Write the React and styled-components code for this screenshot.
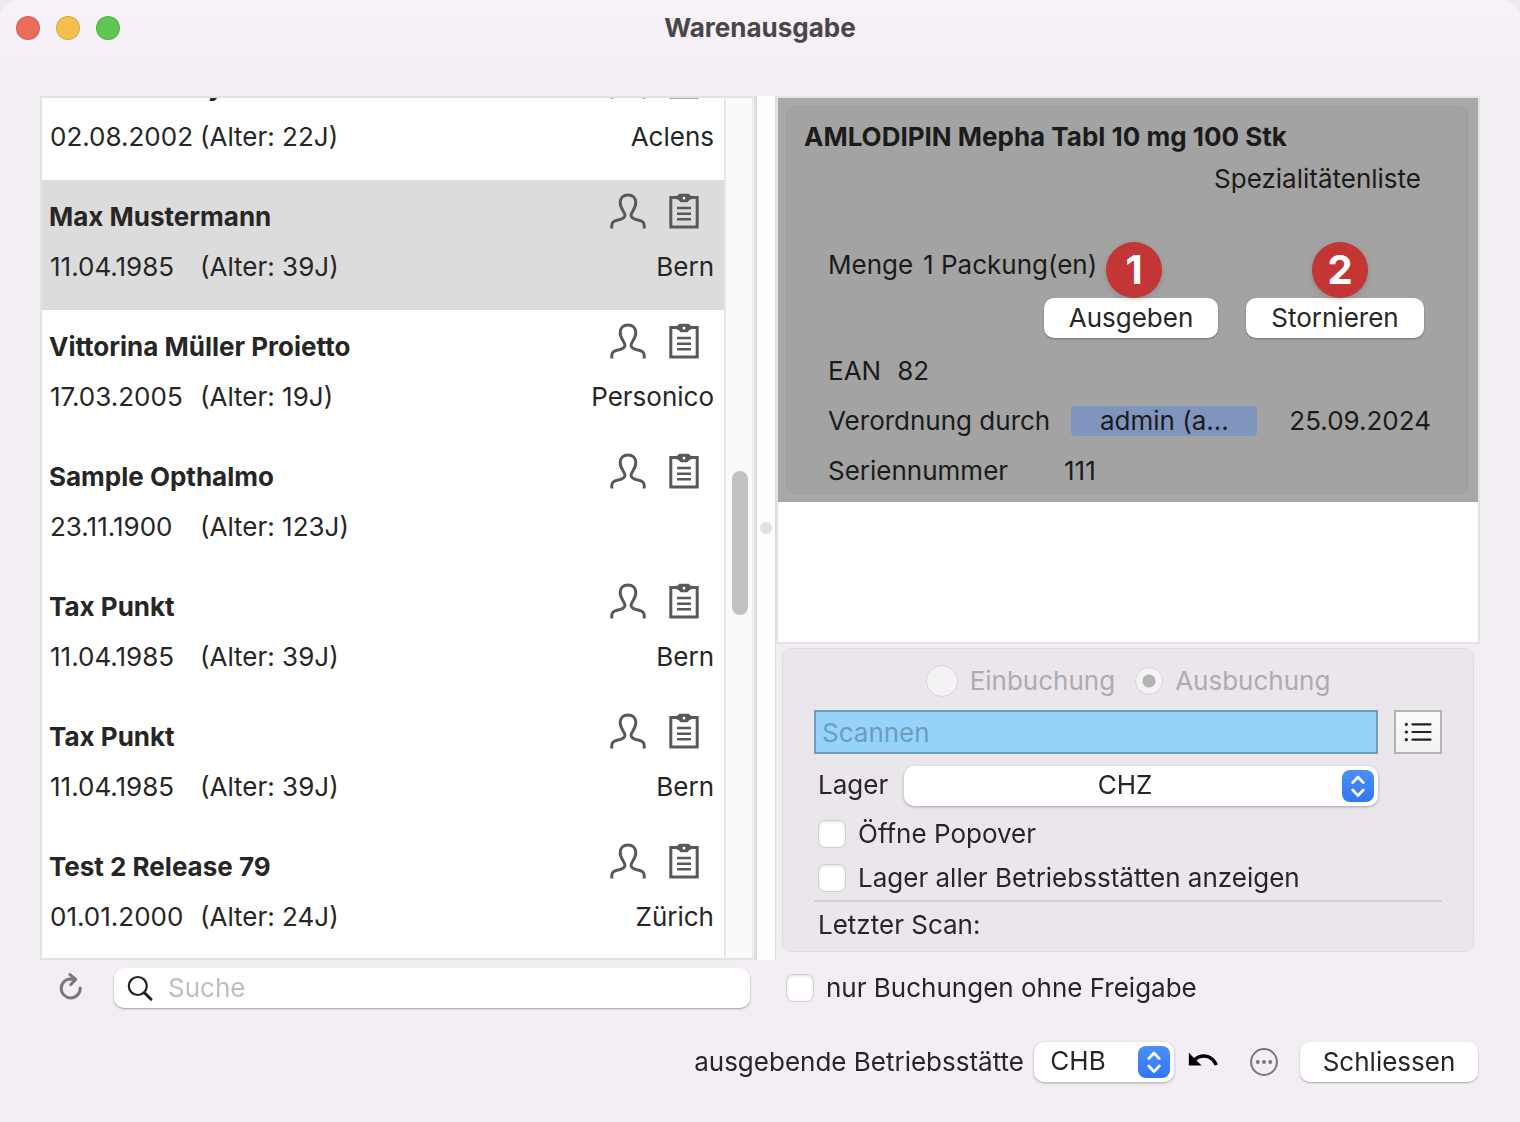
import React, { useEffect, useRef, useState } from "react"
import styled, { createGlobalStyle } from "styled-components"

const GlobalStyle = createGlobalStyle`
  * {
    box-sizing: border-box;
  }
  body {
    margin: 0;
    background: #efeaf0;
  }
  body, button, input, select {
    font-family: Inter, "Liberation Sans", sans-serif;
    font-size: 26px;
    line-height: 32px;
    color: #262626;
  }
`

const Window = styled.div`
  display: flex;
  flex-direction: column;
  height: 100vh;
  min-height: 900px;
  border-radius: 20px 20px 0 0;
  background: linear-gradient(#f8f3f9, #f3eef4 80px);
  overflow: hidden;
`

const TitleBar = styled.header`
  display: grid;
  grid-template-columns: 1fr auto 1fr;
  align-items: center;
  height: 56px;
  flex-shrink: 0;
  padding: 0 16px;
  h1 {
    margin: 0;
    font-size: 26px;
    line-height: 32px;
    font-weight: 700;
    color: #49464a;
  }
`

const Lights = styled.div`
  display: flex;
  gap: 16px;
`

const Light = styled.button`
  width: 24px;
  height: 24px;
  padding: 0;
  border: 1px solid rgba(0, 0, 0, 0.12);
  border-radius: 50%;
  background: ${props => props.$color};
`

const Content = styled.main`
  display: flex;
  flex-direction: column;
  flex: 1;
  min-height: 0;
  padding: 40px;
`

const Split = styled.div`
  display: grid;
  grid-template-columns: minmax(0, 716fr) 20px minmax(0, 704fr);
`

const Panes = styled(Split)`
  flex: 1;
  min-height: 0;
`

const PatientPane = styled.section`
  display: flex;
  min-height: 0;
  border: 2px solid #e3e3e3;
  background: #fff;
`

const PatientList = styled.ul`
  flex: 1;
  min-width: 0;
  margin: 0;
  padding: 0;
  list-style: none;
  overflow-y: auto;
  scrollbar-width: none;
`

const PatientRow = styled.li`
  height: 130px;
  padding: 13px 10px 0 7px;
  background: ${props => (props.$active ? "#dcdcdc" : "#fff")};
`

const PatientHead = styled.div`
  display: flex;
  gap: 22px;
  height: 58px;
  padding-right: 14px;
  h2 {
    flex: 1;
    margin: 0;
    padding-top: 8px;
    font-size: 26px;
    line-height: 32px;
    font-weight: 700;
  }
`

const PatientInfo = styled.div`
  display: grid;
  grid-template-columns: 150px 1fr auto;
  padding-left: 1px;
`

const ScrollTrack = styled.div`
  position: relative;
  width: 30px;
  border-left: 2px solid #e8e8e8;
  border-right: 2px solid #ededed;
  background: #fafafa;
`

const ScrollThumb = styled.div`
  position: absolute;
  top: 43.4%;
  left: 6px;
  width: 16px;
  height: 144px;
  border-radius: 8px;
  background: #c1c1c1;
`

const Divider = styled.div`
  display: flex;
  align-items: center;
  justify-content: center;
  border-left: 1px solid #d6d6d6;
  border-right: 1px solid #d9d9d9;
  background: #fdfdfd;
  &::after {
    content: "";
    width: 12px;
    height: 12px;
    border-radius: 50%;
    background: #e1e1e1;
  }
`

const RightPane = styled.section`
  display: flex;
  flex-direction: column;
  min-width: 0;
`

const OrderList = styled.div`
  flex: 1;
  border: 2px solid #e3e3e3;
  background: #fff;
`

const Order = styled.article`
  padding: 8px 10px 8px 8px;
  background: #a8a8a8;
`

const OrderCard = styled.div`
  display: flex;
  flex-direction: column;
  padding: 14px 36px 6px 41px;
  border: 1px solid #9c9c9c;
  border-radius: 10px;
  background: #a3a3a3;
  color: #1b1b1b;
  h2 {
    margin: 0 0 10px -24px;
    font-size: 26px;
    line-height: 32px;
    font-weight: 700;
  }
`

const ListName = styled.div`
  padding-right: 10px;
  text-align: right;
`

const Quantity = styled.div`
  display: flex;
  gap: 10px;
  margin-top: 54px;
`

const Actions = styled.div`
  display: flex;
  justify-content: flex-end;
  gap: 28px;
  margin-top: 17px;
  padding-right: 7px;
`

const Action = styled.div`
  position: relative;
`

const Badge = styled.span`
  position: absolute;
  top: -56px;
  left: ${props => props.$left};
  width: 56px;
  height: 56px;
  border-radius: 50%;
  background: #c43535;
  box-shadow: 0 2px 6px rgba(0, 0, 0, 0.15);
  color: #fff;
  font-size: 40px;
  line-height: 56px;
  font-weight: 700;
  text-align: center;
`

const PushButton = styled.button`
  display: block;
  height: 40px;
  width: ${props => props.$width};
  padding: 0;
  border: 0;
  border-radius: 10px;
  background: #fff;
  box-shadow: 0 1px 2px rgba(0, 0, 0, 0.3);
  line-height: 38px;
`

const Details = styled.div`
  display: flex;
  flex-direction: column;
  gap: 18px;
  margin-top: 17px;
`

const Detail = styled.div`
  display: flex;
  align-items: center;
  gap: ${props => props.$gap || "0"};
`

const Prescriber = styled.span`
  width: 186px;
  margin: 0 32px 0 auto;
  border-radius: 4px;
  background: #8095bd;
  line-height: 30px;
  text-align: center;
`

const SerialLabel = styled.span`
  width: 236px;
`

const BookingForm = styled.form`
  margin: 4px 6px 8px;
  padding: 16px 31px 10px;
  border: 1px solid #dfdae0;
  border-radius: 10px;
  background: #eae6eb;
`

const Radios = styled.div`
  display: flex;
  justify-content: center;
  gap: 20px;
`

const Choice = styled.label`
  display: flex;
  align-items: center;
  gap: 12px;
  color: ${props => (props.$disabled ? "#aeabaf" : "inherit")};
`

const Radio = styled.input`
  appearance: none;
  width: ${props => props.$size};
  height: ${props => props.$size};
  margin: 0;
  border: 1px solid #d8d4d9;
  border-radius: 50%;
  background: #f4f2f5;
  &:checked {
    background: radial-gradient(circle, #b5b3b6 6px, #f4f2f5 7px);
  }
`

const Checkbox = styled.input`
  appearance: none;
  width: 28px;
  height: 28px;
  margin: 0;
  border: 1px solid #d0ccd1;
  border-radius: 7px;
  background: #fff;
  box-shadow: inset 0 1px 3px rgba(0, 0, 0, 0.12);
  &:checked {
    background: #3b82f7;
  }
`

const ScanRow = styled.div`
  display: flex;
  gap: 16px;
  margin-top: 13px;
`

const ScanInput = styled.input`
  flex: 1;
  min-width: 0;
  height: 44px;
  padding: 0 6px;
  border: 2px solid #6d9dbd;
  border-radius: 0;
  background: #95d3fb;
  outline: none;
  &::placeholder {
    color: #6d9dbd;
    opacity: 1;
  }
`

const ListButton = styled.button`
  display: flex;
  align-items: center;
  justify-content: center;
  width: 48px;
  height: 44px;
  padding: 0;
  border: 2px solid #b3b3b3;
  background: linear-gradient(#fbfbfb, #f2f2f2);
`

const StoreRow = styled.div`
  display: flex;
  gap: 16px;
  margin: 12px 64px 12px 4px;
  label {
    line-height: 38px;
  }
`

const SelectBox = styled.div`
  position: relative;
  flex: ${props => (props.$width ? "none" : "1")};
  width: ${props => props.$width || "auto"};
  select {
    appearance: none;
    display: block;
    width: 100%;
    height: 40px;
    padding: 0 ${props => (props.$width ? "52px" : "32px")} 2px 0;
    border: 0;
    border-radius: 10px;
    background: #fff;
    box-shadow: 0 1px 3px rgba(0, 0, 0, 0.3);
    text-align-last: center;
  }
  svg {
    position: absolute;
    top: 4px;
    right: 4px;
    border-radius: 8px;
    background: linear-gradient(#4a90f8, #3176f7);
    pointer-events: none;
  }
`

const Options = styled.div`
  display: flex;
  flex-direction: column;
  gap: 12px;
  padding-left: 4px;
`

const LastScan = styled.div`
  margin-top: 6px;
  padding: 7px 4px 0;
  border-top: 2px solid #d2ced3;
`

const FilterRow = styled(Split)`
  margin-top: 8px;
  align-items: center;
`

const SearchArea = styled.div`
  display: flex;
  align-items: center;
  gap: 28px;
  padding: 0 6px 0 16px;
`

const SearchField = styled.label`
  display: flex;
  align-items: center;
  flex: 1;
  gap: 14px;
  min-width: 0;
  height: 40px;
  padding: 0 12px;
  border-radius: 10px;
  background: #fff;
  box-shadow: 0 1px 2px rgba(0, 0, 0, 0.35);
  input {
    flex: 1;
    min-width: 0;
    padding: 0;
    border: 0;
    background: none;
    outline: none;
    &::placeholder {
      color: #c0bec1;
      opacity: 1;
    }
  }
`

const IconButton = styled.button`
  display: flex;
  padding: 0;
  border: 0;
  background: none;
`

const FilterOption = styled.div`
  grid-column: 3;
  padding-left: 10px;
`

const Footer = styled.footer`
  display: flex;
  align-items: center;
  justify-content: flex-end;
  gap: 10px;
  margin-top: 34px;
  padding-right: 2px;
`

const FooterIcons = styled.div`
  display: flex;
  align-items: center;
  gap: 30px;
  margin: 0 12px 0 2px;
`

const PersonIcon = () => (
  <svg width="36" height="36" viewBox="0 0 36 36" fill="none" stroke="#595959" strokeWidth="3">
    <path d="M1.8 35.5V32.5C1.8 29 3.8 28 8 27C12.5 26 15 24.8 15 22.2C15 19.2 10.2 16 10.2 9.6C10.2 4.8 13.3 2 18 2C22.7 2 25.8 4.8 25.8 9.6C25.8 16 21 19.2 21 22.2C21 24.8 23.5 26 28 27C32.2 28 34.2 29 34.2 32.5V35.5" />
  </svg>
)

const ClipboardIcon = () => (
  <svg width="32" height="36" viewBox="-1 0 32 36" fill="none" stroke="#595959">
    <path d="M1.8 4.4H28.2V33.9H1.8Z" strokeWidth="3" />
    <path d="M8 15H22M8 20.7H22M8 26.3H22" strokeWidth="2.6" />
    <path
      d="M10.2 0.7H19.8L21.5 2.8H23V6L20.5 7L18.4 9.2H11.6L9.5 7L7 6V2.8H8.5ZM15 3.7A1.4 1.4 0 1 0 15 6.5A1.4 1.4 0 1 0 15 3.7Z"
      fill="#595959"
      fillRule="evenodd"
      stroke="none"
    />
    <circle cx="15" cy="5.1" r="1.4" fill="#fff" stroke="none" />
  </svg>
)

const StepperIcon = () => (
  <svg
    width="32"
    height="32"
    viewBox="0 0 32 32"
    fill="none"
    stroke="#fff"
    strokeWidth="2.8"
    strokeLinecap="round"
    strokeLinejoin="round"
  >
    <path d="M10.7 12.6L16 7L21.3 12.6M10.7 20L16 25.6L21.3 20" />
  </svg>
)

const BulletsIcon = () => (
  <svg width="28" height="20" viewBox="0 0 28 20" stroke="#222" strokeWidth="2.2" strokeLinecap="round">
    <path d="M8.5 2.3H26.5M8.5 10H26.5M8.5 17.7H26.5" />
    <path d="M2.3 2.3h0.1M2.3 10h0.1M2.3 17.7h0.1" strokeWidth="3.2" />
  </svg>
)

const RefreshIcon = () => (
  <svg
    width="30"
    height="30"
    viewBox="-1 0 30 30"
    fill="none"
    stroke="#7a767b"
    strokeWidth="3"
    strokeLinecap="round"
    strokeLinejoin="round"
  >
    <path d="M23.2 15A9.5 9.5 0 1 1 13.7 5.9L18.4 6.4" />
    <path d="M13 1.6L18.6 6.4L13.8 11.6" />
  </svg>
)

const SearchIcon = () => (
  <svg width="28" height="28" viewBox="0 0 28 28" fill="none" stroke="#222">
    <circle cx="11.8" cy="12" r="9" strokeWidth="2.2" />
    <path d="M18.5 18.7L25 25.2" strokeWidth="3" strokeLinecap="round" />
  </svg>
)

const UndoIcon = () => (
  <svg width="34" height="34" viewBox="0 1.5 24 24" fill="#000">
    <path d="M12.5 8c-2.65 0-5.05.99-6.9 2.6L2 7v9h9l-3.62-3.62c1.39-1.16 3.16-1.88 5.12-1.88 3.54 0 6.55 2.31 7.6 5.5l2.37-.78C21.08 11.03 17.15 8 12.5 8z" />
  </svg>
)

const MoreIcon = () => (
  <svg width="28" height="28" viewBox="0 0 28 28" fill="#7a767b">
    <circle cx="14" cy="14" r="12.9" fill="none" stroke="#7a767b" strokeWidth="2" />
    <circle cx="7.8" cy="14" r="2" />
    <circle cx="14" cy="14" r="2" />
    <circle cx="20.2" cy="14" r="2" />
  </svg>
)

const patients = [
  { name: "Melanie Darly", birth: "02.08.2002", age: 22, city: "Aclens" },
  { name: "Max Mustermann", birth: "11.04.1985", age: 39, city: "Bern" },
  { name: "Vittorina Müller Proietto", birth: "17.03.2005", age: 19, city: "Personico" },
  { name: "Sample Opthalmo", birth: "23.11.1900", age: 123, city: "" },
  { name: "Tax Punkt", birth: "11.04.1985", age: 39, city: "Bern" },
  { name: "Tax Punkt", birth: "11.04.1985", age: 39, city: "Bern" },
  { name: "Test 2 Release 79", birth: "01.01.2000", age: 24, city: "Zürich" },
]

const Patients = () => {
  const [activeIndex, setActiveIndex] = useState(1)
  const list = useRef(null)

  useEffect(() => {
    list.current.scrollTop = 48
  }, [])

  return (
    <PatientPane>
      <PatientList ref={list}>
        {patients.map((patient, i) => (
          <PatientRow key={i} $active={activeIndex === i} onClick={() => setActiveIndex(i)}>
            <PatientHead>
              <h2>{patient.name}</h2>
              <PersonIcon />
              <ClipboardIcon />
            </PatientHead>
            <PatientInfo>
              <span>{patient.birth}</span>
              <span>(Alter: {patient.age}J)</span>
              <span>{patient.city}</span>
            </PatientInfo>
          </PatientRow>
        ))}
      </PatientList>
      <ScrollTrack>
        <ScrollThumb />
      </ScrollTrack>
    </PatientPane>
  )
}

const OrderItem = () => (
  <Order>
    <OrderCard>
      <h2>AMLODIPIN Mepha Tabl 10 mg 100 Stk</h2>
      <ListName>Spezialitätenliste</ListName>
      <Quantity>
        <span>Menge</span>
        <span>1 Packung(en)</span>
      </Quantity>
      <Actions>
        <Action>
          <PushButton type="button" $width="174px">
            Ausgeben
          </PushButton>
          <Badge $left="62px">1</Badge>
        </Action>
        <Action>
          <PushButton type="button" $width="178px">
            Stornieren
          </PushButton>
          <Badge $left="66px">2</Badge>
        </Action>
      </Actions>
      <Details>
        <Detail $gap="16px">
          <span>EAN</span>
          <span>82</span>
        </Detail>
        <Detail>
          <span>Verordnung durch</span>
          <Prescriber>admin (a...</Prescriber>
          <span>25.09.2024</span>
        </Detail>
        <Detail>
          <SerialLabel>Seriennummer</SerialLabel>
          <span>111</span>
        </Detail>
      </Details>
    </OrderCard>
  </Order>
)

const Booking = () => (
  <BookingForm>
    <Radios>
      <Choice $disabled>
        <Radio type="radio" name="booking" $size="32px" disabled />
        Einbuchung
      </Choice>
      <Choice $disabled>
        <Radio type="radio" name="booking" $size="28px" disabled defaultChecked />
        Ausbuchung
      </Choice>
    </Radios>
    <ScanRow>
      <ScanInput type="text" placeholder="Scannen" aria-label="Scannen" />
      <ListButton type="button" aria-label="Liste">
        <BulletsIcon />
      </ListButton>
    </ScanRow>
    <StoreRow>
      <label htmlFor="store">Lager</label>
      <SelectBox>
        <select id="store">
          <option>CHZ</option>
        </select>
        <StepperIcon />
      </SelectBox>
    </StoreRow>
    <Options>
      <Choice>
        <Checkbox type="checkbox" />
        Öffne Popover
      </Choice>
      <Choice>
        <Checkbox type="checkbox" />
        Lager aller Betriebsstätten anzeigen
      </Choice>
    </Options>
    <LastScan>Letzter Scan:</LastScan>
  </BookingForm>
)

const App = () => (
  <>
    <GlobalStyle />
    <Window>
      <TitleBar>
        <Lights>
          <Light type="button" aria-label="Schliessen" $color="#ed6a5e" />
          <Light type="button" aria-label="Minimieren" $color="#f5bf4f" />
          <Light type="button" aria-label="Maximieren" $color="#61c554" />
        </Lights>
        <h1>Warenausgabe</h1>
      </TitleBar>
      <Content>
        <Panes>
          <Patients />
          <Divider />
          <RightPane>
            <OrderList>
              <OrderItem />
            </OrderList>
            <Booking />
          </RightPane>
        </Panes>
        <FilterRow>
          <SearchArea>
            <IconButton type="button" aria-label="Aktualisieren">
              <RefreshIcon />
            </IconButton>
            <SearchField>
              <SearchIcon />
              <input type="text" placeholder="Suche" aria-label="Suche" />
            </SearchField>
          </SearchArea>
          <FilterOption>
            <Choice>
              <Checkbox type="checkbox" />
              nur Buchungen ohne Freigabe
            </Choice>
          </FilterOption>
        </FilterRow>
        <Footer>
          <label htmlFor="site">ausgebende Betriebsstätte</label>
          <SelectBox $width="140px">
            <select id="site">
              <option>CHB</option>
            </select>
            <StepperIcon />
          </SelectBox>
          <FooterIcons>
            <IconButton type="button" aria-label="Zurücksetzen">
              <UndoIcon />
            </IconButton>
            <IconButton type="button" aria-label="Mehr">
              <MoreIcon />
            </IconButton>
          </FooterIcons>
          <PushButton type="button" $width="178px">
            Schliessen
          </PushButton>
        </Footer>
      </Content>
    </Window>
  </>
)

export default App
